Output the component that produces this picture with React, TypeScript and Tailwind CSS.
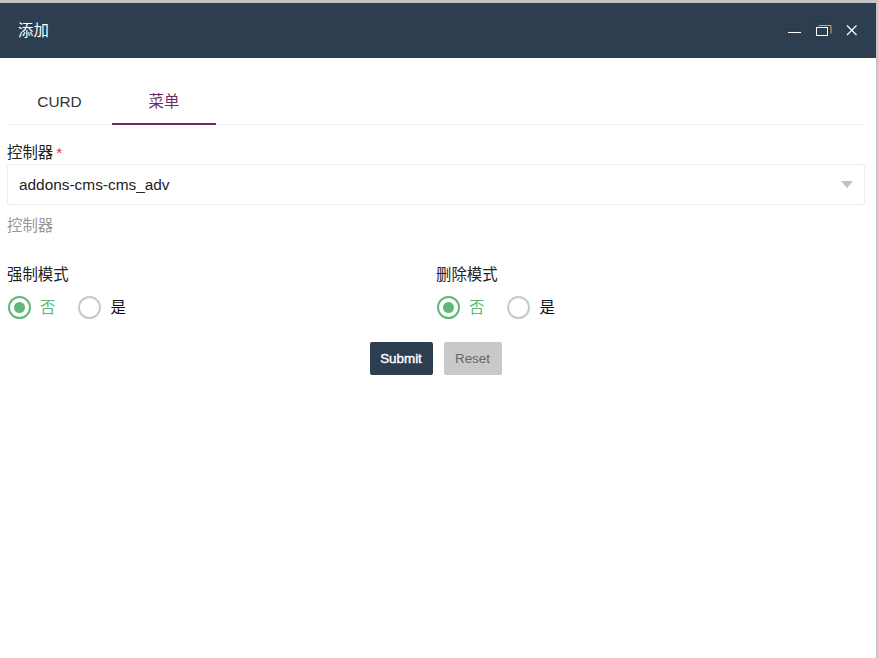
function Radio({ label, checked }: { label: string; checked?: boolean }) {
  return (
    <div className="flex items-center">
      <span
        className={`flex h-[23px] w-[23px] items-center justify-center rounded-full border-2 ${
          checked ? 'border-[#5fb878]' : 'border-[#c9c9c9]'
        }`}
      >
        {checked && <span className="h-[11px] w-[11px] rounded-full bg-[#5fb878]" />}
      </span>
      <span className={`ml-[9px] ${checked ? 'text-[#5fb878]' : 'text-[#111]'}`}>{label}</span>
    </div>
  );
}

function RadioField({ title }: { title: string }) {
  return (
    <div className="flex-1">
      <div className="h-[22px] leading-[22px] text-[#222]">{title}</div>
      <div className="mt-[10px] ml-[1px] flex gap-[23px]">
        <Radio label="否" checked />
        <Radio label="是" />
      </div>
    </div>
  );
}

export default function App() {
  return (
    <div className="flex h-[658px] w-[878px] overflow-hidden bg-white font-['Liberation_Sans','Noto_Sans_CJK_SC',sans-serif] text-[15.4px]">
      <div className="flex w-[876px] flex-col">
        <div className="h-[3px] bg-[#c4c4c4]" />

        {/* title bar */}
        <div className="flex h-[55px] items-center justify-between bg-[#2c3e50] pl-[18px] pr-[19px]">
          <span className="text-white">添加</span>
          <svg width="75" height="19" viewBox="0 0 75 19" fill="none">
            <path d="M2 8.5h16" stroke="#27384a" />
            <path d="M6 11.5h13" stroke="#fff" />
            <rect x="31.5" y="0.5" width="14.5" height="14.5" stroke="#27384a" />
            <path d="M36.5 4.5h12.5v8" stroke="#e8a33d" />
            <rect x="34.5" y="6.5" width="11" height="8" stroke="#fff" />
            <path d="M65 4.5l9.5 9.5M74.5 4.5l-9.5 9.5" stroke="#fff" strokeWidth="1.2" />
          </svg>
        </div>

        <div className="flex flex-col pl-[7px] pr-[11px]">
          {/* tabs */}
          <div className="mt-[24px] mr-[1px] flex h-[43px] border-b border-[#eeeeee]">
            <div className="flex h-[43px] w-[105px] items-center justify-center pb-[3px] text-[#333]">CURD</div>
            <div className="flex h-[43px] w-[104px] items-center justify-center border-b-2 border-[#6f2a68] pb-[1px] text-[#6f2a68]">
              菜单
            </div>
          </div>

          {/* controller */}
          <div className="mt-[17px] flex h-[21px] items-center text-[#222]">
            控制器<span className="ml-[3px] text-[#e4393c]">*</span>
          </div>
          <div className="mt-[1px] flex h-[41px] items-center justify-between rounded-[2px] border border-[#eeeeee] pl-[11px] pr-[11px] text-[#222]">
            <span>addons-cms-cms_adv</span>
            <span className="h-0 w-0 border-x-[6px] border-t-[7px] border-x-transparent border-t-[#c2c2c2]" />
          </div>
          <div className="mt-[10px] h-[22px] leading-[22px] text-[#999]">控制器</div>

          <div className="mt-[27px] flex">
            <RadioField title="强制模式" />
            <RadioField title="删除模式" />
          </div>

          {/* actions */}
          <div className="mt-[23px] flex justify-center gap-[11px] pr-[1px] text-[13.4px]">
            <button className="h-[33px] w-[63px] rounded-[2px] bg-[#2c3e50] text-white [-webkit-text-stroke:0.4px_white]">
              Submit
            </button>
            <button className="h-[33px] w-[58px] rounded-[2px] bg-[#c9c9c9] text-[#666]">Reset</button>
          </div>
        </div>
      </div>
      <div className="w-[2px] bg-[#c4c4c4]" />
    </div>
  );
}
